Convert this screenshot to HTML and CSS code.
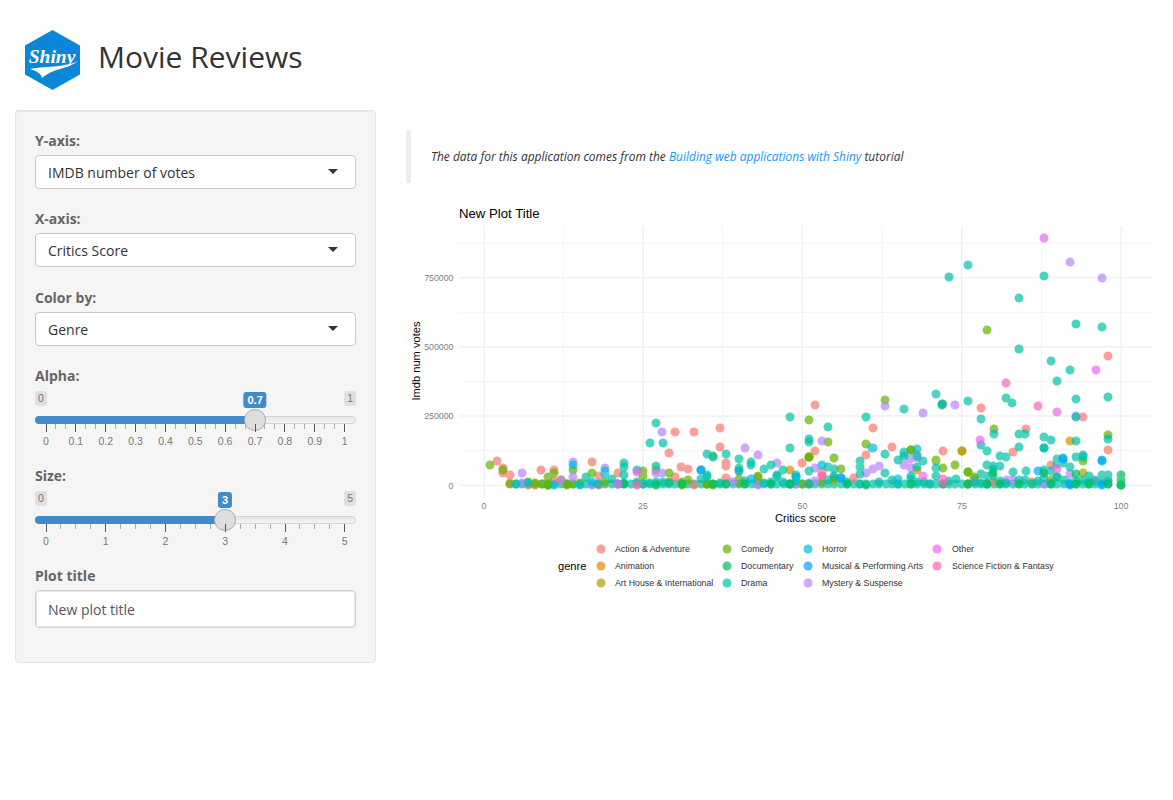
FILE: index.html
```html
<!DOCTYPE html>
<html lang="en">
<head>
<meta charset="utf-8">
<title>Movie Reviews</title>
<link rel="stylesheet" href="styles.css">
</head>
<body>
<div class="page">
  <header class="header">
    <svg class="logo" viewBox="0 0 55 60" width="55" height="60" aria-label="Shiny logo">
      <polygon class="logo-hex" points="27.5,0 55,15.5 55,44.5 27.5,60 0,44.5 0,15.5"/>
      <text class="logo-text" x="27" y="33" text-anchor="middle">Shiny</text>
      <path class="logo-swoosh" d="M5 39C18 36 40 38 53 31C44 39 28 38 17 48C16 43 11 41 5 39Z"/>
    </svg>
    <h1 class="title">Movie Reviews</h1>
  </header>
  <div class="row">
    <aside class="well">
      <div class="group">
        <label class="label label-field">Y-axis:</label>
        <div class="select">IMDB number of votes</div>
      </div>
      <div class="group">
        <label class="label label-field">X-axis:</label>
        <div class="select">Critics Score</div>
      </div>
      <div class="group group-last-select">
        <label class="label label-field">Color by:</label>
        <div class="select">Genre</div>
      </div>
      <div class="group slider-group">
        <label class="label">Alpha:</label>
        <div class="irs">
          <div class="irs-limits"><span class="irs-limit">0</span><span class="irs-limit">1</span></div>
          <div class="irs-track">
            <div class="irs-fill" style="width:68.7%"></div>
            <div class="irs-handle" style="left:68.7%"></div>
            <span class="irs-value" style="left:68.7%">0.7</span>
          </div>
          <div class="ticks">
            <i class="mj"><span>0</span></i><i class="mn"></i><i class="mn"></i>
            <i class="mj"><span>0.1</span></i><i class="mn"></i><i class="mn"></i>
            <i class="mj"><span>0.2</span></i><i class="mn"></i><i class="mn"></i>
            <i class="mj"><span>0.3</span></i><i class="mn"></i><i class="mn"></i>
            <i class="mj"><span>0.4</span></i><i class="mn"></i><i class="mn"></i>
            <i class="mj"><span>0.5</span></i><i class="mn"></i><i class="mn"></i>
            <i class="mj"><span>0.6</span></i><i class="mn"></i><i class="mn"></i>
            <i class="mj"><span>0.7</span></i><i class="mn"></i><i class="mn"></i>
            <i class="mj"><span>0.8</span></i><i class="mn"></i><i class="mn"></i>
            <i class="mj"><span>0.9</span></i><i class="mn"></i><i class="mn"></i>
            <i class="mj"><span>1</span></i>
          </div>
        </div>
      </div>
      <div class="group slider-group">
        <label class="label">Size:</label>
        <div class="irs">
          <div class="irs-limits"><span class="irs-limit">0</span><span class="irs-limit">5</span></div>
          <div class="irs-track">
            <div class="irs-fill" style="width:59.3%"></div>
            <div class="irs-handle" style="left:59.3%"></div>
            <span class="irs-value" style="left:59.3%">3</span>
          </div>
          <div class="ticks">
            <i class="mj"><span>0</span></i><i class="mn"></i><i class="mn"></i><i class="mn"></i>
            <i class="mj"><span>1</span></i><i class="mn"></i><i class="mn"></i><i class="mn"></i>
            <i class="mj"><span>2</span></i><i class="mn"></i><i class="mn"></i><i class="mn"></i>
            <i class="mj"><span>3</span></i><i class="mn"></i><i class="mn"></i><i class="mn"></i>
            <i class="mj"><span>4</span></i><i class="mn"></i><i class="mn"></i><i class="mn"></i>
            <i class="mj"><span>5</span></i>
          </div>
        </div>
      </div>
      <div class="group title-group">
        <label class="label label-field">Plot title</label>
        <input class="text-input" type="text" value="New plot title">
      </div>
    </aside>
    <main class="main">
      <blockquote class="quote">The data for this application comes from the <a class="link" href="#">Building web applications with Shiny</a> tutorial</blockquote>
      <svg class="plot" viewBox="406 200 752 400" width="752" height="400">
        <g class="grid-minor">
          <path d="M459 450.600H1153M459 381.500H1153M459 312.300H1153M459 243H1153M563.300 226V497M722.800 226V497M882.300 226V497M1041.500 226V497"/>
        </g>
        <g class="grid-major">
          <path d="M459 485.300H1153M459 416H1153M459 347H1153M459 277.700H1153M484.300 226V497M643.300 226V497M802.300 226V497M961.700 226V497M1121 226V497"/>
        </g>

        <path class="pt c-dra" d="M516 484h0M522 484h0M529 484h0M535 484h0M542 484h0M548 484h0M554 484h0M561 484h0M567 484h0M573 484h0M580 484h0M586 484h0M592 484h0M599 484h0M605 484h0M612 484h0M618 484h0M624 484h0M631 484h0M637 484h0M643 484h0M650 484h0M656 484h0M663 484h0M669 484h0M675 484h0M682 484h0M688 484h0M694 484h0M701 484h0M707 484h0M713 484h0M720 484h0M726 484h0M733 484h0M739 484h0M745 484h0M752 484h0M758 484h0M764 484h0M771 484h0M777 484h0M784 484h0M790 484h0M796 484h0M803 484h0M809 484h0M815 484h0M822 484h0M828 484h0M834 484h0M841 484h0M847 484h0M854 484h0M860 484h0M866 484h0M873 484h0M879 484h0M886 484h0M892 484h0M898 484h0M905 484h0M911 484h0M917 484h0M924 484h0M930 484h0M936 484h0M943 484h0M949 484h0M955 484h0M962 484h0M968 484h0M975 484h0M981 484h0M987 484h0M994 484h0M1000 484h0M1006 484h0M1013 484h0M1019 484h0M1025 484h0M1032 484h0M1038 484h0M1045 484h0M1051 484h0M1057 484h0M1064 484h0M1070 484h0M1076 484h0M1083 484h0M1089 484h0M1095 484h0M1102 484h0M1108 484h0"/>
        <path class="pt c-act" d="M497 461h0M503 468h0M503 473h0M510 475h0M541 470h0M554 470h0M554 481h0M592 462h0M599 476h0M618 473h0M669 453h0M675 432h0M694 432h0M675 477h0M681 467h0M688 469h0M720 428h0M720 447h0M726 463h0M726 466h0M726 478h0M815 405h0M873 428h0M815 451h0M802 463h0M822 472h0M822 474h0M866 455h0M892 447h0M854 478h0M809 457h0M1108 356h0M981 408h0M943 404h0M1083 417h0M1026 429h0M943 451h0M1013 452h0M1108 450h0M1051 465h0M993 482h0M510 483h0M694 485h0M528 485h0M599 485h0"/>
        <path class="pt c-ani" d="M535 485h0M656 470h0M790 470h0M917 470h0M1070 441h0M962 451h0M561 480h0M1032 482h0"/>
        <path class="pt c-art" d="M962 451h0M758 476h0M1083 473h0M1051 480h0M834 480h0M975 479h0"/>
        <path class="pt c-com" d="M490 465h0M503 470h0M987 330h0M885 400h0M809 420h0M994 429h0M1108 435h0M828 442h0M866 444h0M911 450h0M834 458h0M936 460h0M809 457h0M841 469h0M713 456h0M936 461h0M943 468h0M955 465h0M968 472h0M1083 461h0M974 477h0M592 473h0M573 470h0M643 471h0M643 476h0M669 473h0M554 473h0M548 477h0M510 484h0M528 482h0M535 483h0M542 484h0M548 485h0M567 484h0M573 484h0M580 483h0M605 482h0M669 482h0M682 482h0M682 485h0M688 480h0M707 484h0M713 485h0M739 483h0M739 479h0M758 477h0M758 481h0M802 484h0M822 482h0M834 478h0M968 484h0"/>
        <path class="pt c-com" d="M911 450h0M809 457h0M567 485h0M707 484h0M968 472h0M548 485h0"/>
        <path class="pt c-mys" d="M662 432h0M522 473h0M522 483h0M573 462h0M605 468h0M662 473h0M656 473h0M561 480h0M573 477h0M592 485h0M733 482h0M758 485h0M745 448h0M758 455h0M739 471h0M777 463h0M815 468h0M822 441h0M885 406h0M866 473h0M873 469h0M879 466h0M904 465h0M911 468h0M732 482h0M815 481h0M796 484h0M809 483h0M1070 262h0M1102 278h0M923 413h0M955 405h0M1076 416h0M917 455h0M910 459h0M1108 481h0M1007 480h0M1013 480h0M974 482h0M1095 480h0M1070 474h0M1044 484h0M917 458h0"/>
        <path class="pt c-dra" d="M949 277h0M968 265h0M1044 276h0M1019 298h0M1076 324h0M1102 327h0M1019 349h0M1051 361h0M1070 370h0M1057 381h0M936 394h0M968 401h0M1006 398h0M1012 403h0M1076 399h0M1108 397h0M942 404h0M904 409h0M790 417h0M866 417h0M1076 417h0M981 419h0M828 427h0M1019 434h0M1025 434h0M994 434h0M1044 437h0M1051 440h0M1076 441h0M1108 439h0M809 439h0M790 448h0M981 445h0M987 451h0M1019 447h0M1044 448h0M904 452h0M917 449h0M885 454h0M1000 456h0M1006 457h0M1057 459h0M1076 457h0M1083 455h0M898 460h0M923 461h0M860 461h0M656 423h0M650 443h0M663 443h0M656 466h0M624 463h0M624 475h0M586 477h0M637 470h0M612 479h0M707 454h0M713 457h0M726 454h0M739 459h0M751 462h0M739 468h0M764 469h0M771 465h0M783 470h0M777 475h0M809 471h0M828 467h0M834 469h0M796 475h0M860 467h0M860 474h0M885 473h0M904 453h0M898 460h0M917 456h0M911 476h0M1063 463h0M1070 467h0M917 467h0M936 468h0M936 476h0M987 465h0M993 466h0M993 476h0M1000 466h0M1013 472h0M1026 471h0M1044 470h0M1051 471h0M1057 477h0M1057 464h0M981 474h0M987 476h0M1102 475h0M1108 475h0M1089 476h0M956 479h0M701 479h0M707 475h0M516 484h0M649 483h0M656 482h0M663 482h0M720 483h0M771 482h0M783 482h0M796 481h0M828 480h0M847 482h0M879 482h0M892 480h0M924 482h0M949 481h0M975 482h0M1000 481h0M1025 480h0M1038 481h0M1064 480h0M1083 480h0M1095 481h0M1102 481h0M1108 480h0"/>
        <path class="pt c-dra" d="M809 442h0M1044 448h0M904 456h0M1083 457h0M942 405h0M624 467h0M751 465h0M739 471h0M777 476h0M834 476h0M796 477h0M707 477h0M911 479h0M917 482h0M993 469h0M1044 478h0M1057 477h0M1076 481h0M1019 480h0M1089 482h0M598 484h0M624 483h0M637 482h0M643 484h0M669 483h0M745 481h0M764 483h0M790 484h0M860 484h0M898 484h0M930 484h0M981 483h0M987 484h0M1006 483h0M1032 484h0M1051 483h0M1070 483h0"/>
        <path class="pt c-hor" d="M573 465h0M605 471h0M554 485h0M605 474h0M592 482h0M580 485h0M701 470h0M752 479h0M528 483h0M796 477h0M872 448h0M1063 458h0M1102 460h0M873 448h0M751 479h0M822 465h0M841 478h0M898 479h0M618 484h0"/>
        <path class="pt c-mus" d="M1038 471h0M1063 459h0M1102 461h0M1070 485h0M1102 485h0M701 470h0M841 478h0"/>
        <path class="pt c-doc" d="M624 484h0M656 485h0M682 484h0M713 484h0M726 484h0M745 484h0M771 484h0M790 484h0M809 484h0M847 484h0M866 485h0M911 484h0M943 484h0M968 484h0M987 484h0M1000 484h0M1019 484h0M1051 484h0M1076 484h0M1089 484h0M1108 484h0M1121 475h0M1121 480h0M1121 485h0M1076 474h0M1044 473h0M993 473h0"/>
        <path class="pt c-doc" d="M1121 485h0"/>
        <path class="pt c-oth" d="M1044 238h0M1096 370h0M1057 412h0M980 440h0M1057 469h0M923 476h0M637 472h0M618 484h0"/>
        <path class="pt c-sci" d="M1006 383h0M1038 406h0M943 479h0M943 482h0M822 476h0M637 485h0"/>

        <text class="t-title" x="459" y="218">New Plot Title</text>
        <text class="t-tick" x="453.500" y="281" text-anchor="end">750000</text>
        <text class="t-tick" x="453.500" y="350" text-anchor="end">500000</text>
        <text class="t-tick" x="453.500" y="419" text-anchor="end">250000</text>
        <text class="t-tick" x="453.500" y="488.500" text-anchor="end">0</text>
        <text class="t-tick" x="484" y="509" text-anchor="middle">0</text>
        <text class="t-tick" x="643" y="509" text-anchor="middle">25</text>
        <text class="t-tick" x="802.500" y="509" text-anchor="middle">50</text>
        <text class="t-tick" x="962" y="509" text-anchor="middle">75</text>
        <text class="t-tick" x="1121" y="509" text-anchor="middle">100</text>
        <text class="t-axis" x="805.500" y="521.500" text-anchor="middle">Critics score</text>
        <text class="t-axis" transform="translate(419.500 361) rotate(-90)" text-anchor="middle">Imdb num votes</text>
        <text class="t-axis" x="558" y="570">genre</text>

        <path class="pt c-act" d="M601 549h0"/><text class="t-leg" x="615" y="552">Action &amp; Adventure</text>
        <path class="pt c-ani" d="M601 566h0"/><text class="t-leg" x="615" y="569">Animation</text>
        <path class="pt c-art" d="M601 583h0"/><text class="t-leg" x="615" y="586">Art House &amp; International</text>
        <path class="pt c-com" d="M727 549h0"/><text class="t-leg" x="741" y="552">Comedy</text>
        <path class="pt c-doc" d="M727 566h0"/><text class="t-leg" x="741" y="569">Documentary</text>
        <path class="pt c-dra" d="M727 583h0"/><text class="t-leg" x="741" y="586">Drama</text>
        <path class="pt c-hor" d="M808 549h0"/><text class="t-leg" x="822" y="552">Horror</text>
        <path class="pt c-mus" d="M808 566h0"/><text class="t-leg" x="822" y="569">Musical &amp; Performing Arts</text>
        <path class="pt c-mys" d="M808 583h0"/><text class="t-leg" x="822" y="586">Mystery &amp; Suspense</text>
        <path class="pt c-oth" d="M937 549h0"/><text class="t-leg" x="952" y="552">Other</text>
        <path class="pt c-sci" d="M937 566h0"/><text class="t-leg" x="952" y="569">Science Fiction &amp; Fantasy</text>
      </svg>
    </main>
  </div>
</div>
</body>
</html>
```
FILE: styles.css
```css
* { box-sizing: border-box; }
body { margin: 0; background: #fff; color: #333; font-family: "Open Sans", "Liberation Sans", sans-serif; font-size: 14px; line-height: 20px; }
.page { padding: 30px 15px 0; }
.header { display: flex; align-items: center; gap: 18px; height: 60px; padding-left: 10px; margin-bottom: 20px; }
.logo { flex: none; }
.logo-hex { fill: #0b87da; }
.logo-text { fill: #fff; font-family: "Liberation Serif", serif; font-style: italic; font-weight: 700; font-size: 19.500px; }
.logo-swoosh { fill: #fff; }
.title { margin: 0 0 8px; font-size: 30px; font-weight: 400; line-height: 33px; color: #333; }
.row { display: flex; align-items: flex-start; gap: 30px; }
.well { flex: none; width: 361px; height: 553px; padding: 19px; background: #f5f5f5; border: 1px solid #e3e3e3; border-radius: 4px; box-shadow: inset 0 1px 1px rgba(0,0,0,.05); }
.group { margin-bottom: 19.400px; }
.group-last-select { margin-bottom: 20px; }
.slider-group { height: 81px; margin-bottom: 19.600px; }
.title-group { margin-top: -2px; }
.label { display: block; margin-bottom: 5px; font-weight: 700; color: #666; }
.label-field { height: 25px; margin-bottom: 0; padding-top: 1px; }
.select { position: relative; height: 34px; padding: 7px 12px 5px; background: #fff; border: 1px solid #c8c8c8; border-radius: 4px; color: #333; }
.select::after { content: ""; position: absolute; right: 17px; top: 13px; border-style: solid; border-width: 5px 5px 0; border-color: #333 transparent transparent; }
.text-input { display: block; width: 100%; height: 38px; padding: 7px 12px 5px; background: #fff; border: 1px solid #d0d0d0; border-radius: 4px; color: #555; font: inherit; box-shadow: inset 0 0 0 1px #e8e8e8; }
.irs { font-family: "Liberation Sans", sans-serif; }
.irs-limits { display: flex; justify-content: space-between; height: 15px; }
.irs-limit { height: 15px; padding: 0 3px; background: #e0e0e0; border-radius: 3px; color: #777; font-size: 10.500px; line-height: 15px; }
.irs-track { position: relative; height: 8px; margin-top: 10px; background: linear-gradient(#e6e6e6, #f4f4f4); border: 1px solid #d4d4d4; border-radius: 4px; }
.irs-fill { height: 8px; margin: -1px 0 0 -1px; background: #428bca; border-radius: 4px 0 0 4px; }
.irs-handle { position: absolute; top: -8px; width: 22px; height: 22px; margin-left: -11px; background: #dedede; border: 1px solid #ababab; border-radius: 50%; }
.irs-value { position: absolute; top: -25px; transform: translateX(-50%); padding: 0 4px; height: 16px; background: #428bca; border-radius: 3px; color: #fff; font-size: 11px; font-weight: 700; line-height: 16px; }
.ticks { display: flex; justify-content: space-between; padding: 0 10.500px; }
.ticks i { display: block; position: relative; width: 1px; }
.mj { height: 8px; background: #555; }
.mn { height: 5px; background: #aaa; }
.ticks span { position: absolute; top: 10px; left: 50%; transform: translateX(-50%); color: #777; font-size: 10.500px; font-style: normal; line-height: 14px; white-space: nowrap; }
.main { flex: 1; min-width: 0; padding-top: 20px; }
.quote { margin: 0 0 17px; padding: 16.500px 20px; height: 53px; border-left: 5px solid #eee; font-size: 11.980px; font-style: italic; color: #333; }
.link { color: #2196f3; text-decoration: none; }
.plot { display: block; }
.grid-major path { fill: none; stroke: #f0f0f0; stroke-width: 1.300; }
.grid-minor path { fill: none; stroke: #f4f4f4; stroke-width: 1; }
.pt { fill: none; stroke-width: 9; stroke-linecap: round; stroke-opacity: .7; }
.c-act { stroke: #f8766d; }
.c-ani { stroke: #db8e00; }
.c-art { stroke: #aea200; }
.c-com { stroke: #64b200; }
.c-doc { stroke: #00bd5c; }
.c-dra { stroke: #00c1a7; }
.c-hor { stroke: #00bade; }
.c-mus { stroke: #00a6ff; }
.c-mys { stroke: #b385ff; }
.c-oth { stroke: #ef67eb; }
.c-sci { stroke: #ff63b6; }
.plot text { font-family: "Liberation Sans", sans-serif; }
.t-title { font-size: 13.200px; fill: #000; }
.t-tick { font-size: 8.800px; fill: #808080; }
.t-axis { font-size: 11.100px; fill: #000; }
.t-leg { font-size: 8.800px; fill: #333; }
```
